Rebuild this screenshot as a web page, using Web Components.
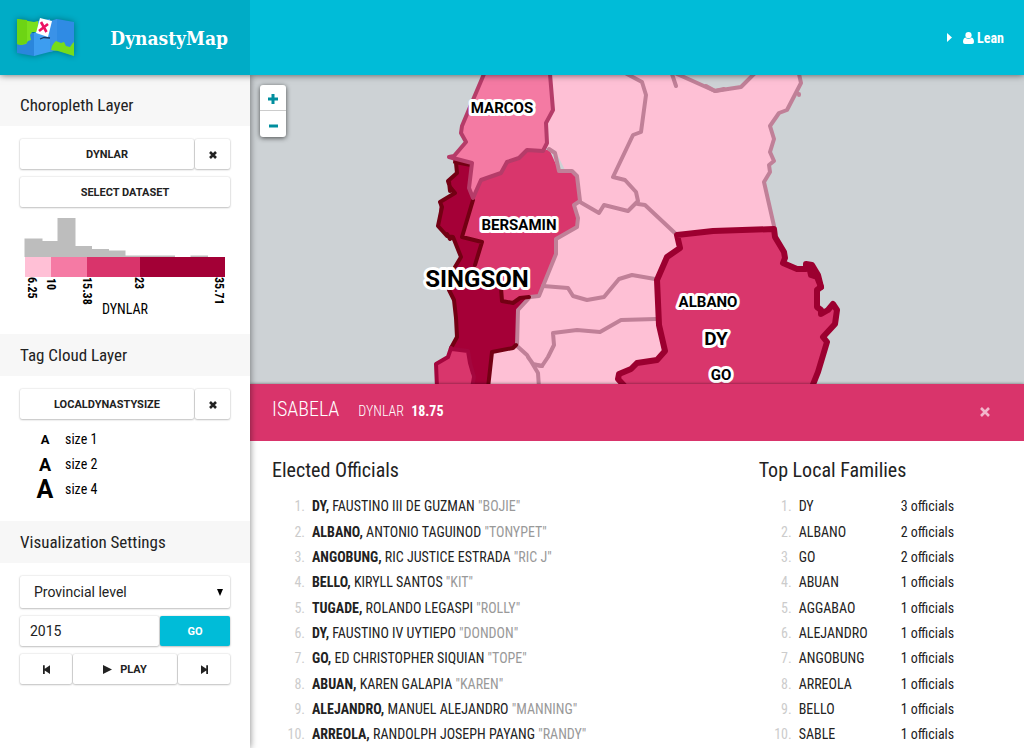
<!DOCTYPE html>
<html lang="en">
<head>
<meta charset="utf-8">
<title>DynastyMap</title>
<style>
  html, body { margin: 0; height: 100%; }
  body {
    font-family: "Roboto Condensed", Roboto, sans-serif;
    font-size: 14px;
    color: #222;
    background: #fff;
  }
</style>
</head>
<body>
<dynasty-app></dynasty-app>

<template id="app-template">
  <style>
    :host { display: grid; grid-template: auto minmax(0, 1fr) / 250px minmax(0, 1fr); height: 100vh; overflow: hidden; }
    .top { grid-column: 1 / -1; position: relative; z-index: 3; display: grid; grid-template-columns: 250px minmax(0, 1fr); box-shadow: 0 0 7px rgba(0,0,0,.6); }
    aside { position: relative; z-index: 2; display: flex; flex-direction: column; background: #fff; box-shadow: 0 0 7px rgba(0,0,0,.5); }
    main { display: flex; flex-direction: column; min-height: 0; }
    area-map { flex: 1; min-height: 0; }
  </style>
  <div class="top">
    <brand-bar></brand-bar>
    <user-bar></user-bar>
  </div>
  <aside>
    <side-panel first>
      <span slot="title">Choropleth Layer</span>
      <layer-buttons name="DYNLAR"></layer-buttons>
      <push-button>SELECT DATASET</push-button>
      <choropleth-legend></choropleth-legend>
    </side-panel>
    <side-panel>
      <span slot="title">Tag Cloud Layer</span>
      <layer-buttons name="LOCALDYNASTYSIZE"></layer-buttons>
      <tag-legend></tag-legend>
    </side-panel>
    <side-panel>
      <span slot="title">Visualization Settings</span>
      <viz-settings></viz-settings>
    </side-panel>
  </aside>
  <main>
    <area-map></area-map>
    <area-detail></area-detail>
  </main>
</template>

<template id="brand-bar-template">
  <style>
    :host { display: flex; align-items: center; justify-content: space-between; height: 75px; padding: 0 22px 0 10px; background: #00acc6; }
    h1 { margin: 0; font: bold 19px/24px "Roboto Slab", "DejaVu Serif Condensed", "DejaVu Serif", serif; color: #fff; }
    svg { display: block; filter: drop-shadow(0 0 3px rgba(0,0,0,.35)); }
  </style>
  <svg width="72" height="52" viewBox="10 12 72 52" aria-hidden="true">
    <path fill="#2a86dc" d="M17 30 34 33V56L17 53Z"/>
    <path fill="#3d9df0" d="M34 33 57 19V50L34 56Z"/>
    <path fill="#2f8be4" d="M57 19 74 22V56L57 50Z"/>
    <path fill="#3a92e8" d="M50 21 57 19V50L50 52Z"/>
    <path fill="#7be01e" d="M17 19 34 22 38 21V32L32 32 30 35 31 40 28 41 26 44 21 45 17 44Z"/>
    <path fill="#6dd414" d="M17 19 27 20V43L21 45 17 44Z"/>
    <path fill="#76dd1a" d="M51 50 52 46 54 43 56 41 61 43 64 42 66 46 70 47 72 44 74 42V56L58 51Z"/>
    <path fill="#3fa0f2" d="M38 21 50 19 50 38 38 36Z"/>
    <path fill="#fff" d="M40 18 52 21 48 37 36 33Z"/>
    <path fill="none" stroke="#173a66" stroke-width="1.3" d="M40 39 44 37.500 50 38"/>
    <path fill="none" stroke="#ec1162" stroke-width="2.600" d="M41 22 46.500 32M48 24 39 31"/>
  </svg>
  <h1>DynastyMap</h1>
</template>

<template id="user-bar-template">
  <style>
    :host { display: flex; justify-content: flex-end; align-items: center; height: 75px; padding-right: 20px; background: #00bcd8; }
    a { display: flex; align-items: center; font-weight: bold; line-height: 20px; color: #fff; text-decoration: none; }
    .arrow { margin-right: 11px; }
    .user { margin-right: 3px; }
  </style>
  <a href="#user">
    <svg class="arrow" width="5" height="9" viewBox="0 0 5 9" aria-hidden="true"><path fill="#fff" d="M0 0 5 4.500 0 9Z"/></svg>
    <svg class="user" width="11" height="12" viewBox="0 0 11 12" aria-hidden="true"><circle cx="5.500" cy="3.200" r="3.100" fill="#fff"/><path fill="#fff" d="M2.500 5.500Q5.500 8.500 8.500 5.500 11 6 11 10 11 12 9 12H2Q0 12 0 10 0 6 2.500 5.500Z"/></svg>
    <span>Lean</span>
  </a>
</template>

<template id="side-panel-template">
  <style>
    :host { display: block; }
    h2 { margin: 0; padding: 0 20px; font-size: 17px; line-height: 42px; font-weight: 400; background: #f7f7f7; }
    :host([first]) h2 { padding-top: 9px; }
    div { display: flex; flex-direction: column; gap: 8px; padding: 13px 20px 19px; }
  </style>
  <h2><slot name="title"></slot></h2>
  <div><slot></slot></div>
</template>

<template id="push-button-template">
  <style>
    :host { display: flex; }
    button { flex: 1; display: flex; align-items: center; justify-content: center; gap: 8px; min-width: 0; height: 30px; margin: 0; padding: 1px 0 0; border: 0; border-radius: 2px; background: #fff; color: #222; font: bold 11px/17px Roboto, sans-serif; box-shadow: 0 0 2px rgba(0,0,0,.2), 0 1px 2px rgba(0,0,0,.2); }
    :host([primary]) button { background: #00bcd8; color: #fff; }
  </style>
  <button type="button"><slot></slot></button>
</template>

<template id="layer-buttons-template">
  <style>
    :host { display: flex; gap: 1px; }
    .name { flex: 1; }
    .clear { width: 35px; }
    svg { display: block; }
  </style>
  <push-button class="name"><span></span></push-button>
  <push-button class="clear"><svg width="8" height="8" viewBox="0 0 8 8" role="img" aria-label="Clear"><path stroke="#222" stroke-width="2.600" d="M1 1 7 7M7 1 1 7"/></svg></push-button>
</template>

<template id="choropleth-legend-template">
  <style>
    :host { display: block; }
    svg { display: block; width: 100%; height: 100px; overflow: visible; }
    .tick text { font-size: 12px; font-weight: bold; }
    .title { font-size: 14px; }
  </style>
  <svg viewBox="20 215 210 100" role="img" aria-label="DYNLAR legend">
    <path fill="#bdbdbd" d="M24.500 257V238.500H42.500V241H57.500V218H75.500V246H92V249H109V250.500H125.500V255.500H175V257H190.500V255.500H208V257Z"/>
    <rect x="25" y="257" width="26" height="20" fill="#ffc0d6"/>
    <rect x="51" y="257" width="36" height="20" fill="#f57aa4"/>
    <rect x="87" y="257" width="53" height="20" fill="#d9346b"/>
    <rect x="140" y="257" width="85" height="20" fill="#a30036"/>
    <g class="tick">
      <text transform="translate(28 277) rotate(90)">6.25</text>
      <text transform="translate(47 278) rotate(90)">10</text>
      <text transform="translate(83 277) rotate(90)">15.38</text>
      <text transform="translate(135 277) rotate(90)">23</text>
      <text transform="translate(215 277) rotate(90)">35.71</text>
    </g>
    <text class="title" x="125" y="314" text-anchor="middle">DYNLAR</text>
  </svg>
</template>

<template id="tag-legend-template">
  <style>
    :host { display: block; }
    ul { list-style: none; margin: 0; padding: 0 0 0 5px; color: #000; }
    li { display: grid; grid-template-columns: 40px 1fr; align-items: center; height: 25px; line-height: 25px; }
    b { text-align: center; font-family: Roboto, sans-serif; }
    .s { font-size: 13px; }
    .m { font-size: 18px; }
    .l { font-size: 25px; }
  </style>
  <ul>
    <li><b class="s">A</b><span>size 1</span></li>
    <li><b class="m">A</b><span>size 2</span></li>
    <li><b class="l">A</b><span>size 4</span></li>
  </ul>
</template>

<template id="viz-settings-template">
  <style>
    :host { display: flex; flex-direction: column; gap: 8px; }
    .row { display: flex; gap: 1px; }
    .field { position: relative; display: block; }
    select, input { box-sizing: border-box; width: 100%; margin: 0; border: 0; border-radius: 2px; background: #fff; color: #222; font: 14px/20px Roboto, sans-serif; box-shadow: 0 0 2px rgba(0,0,0,.2), 0 1px 2px rgba(0,0,0,.2); }
    select { appearance: none; height: 32px; padding: 0 14px; }
    input { flex: 1; min-width: 0; height: 30px; padding: 0 10px; }
    .mark { position: absolute; right: 7px; top: 13px; }
    .go { width: 70px; }
    .step { width: 52px; }
    .play { flex: 1; }
    svg { display: block; }
  </style>
  <label class="field">
    <select aria-label="Level"><option>Provincial level</option><option>Municipal level</option></select>
    <svg class="mark" width="6" height="7" viewBox="0 0 6 7" aria-hidden="true"><path d="M0 0H6L3 7Z"/></svg>
  </label>
  <div class="row">
    <input type="text" value="2015" aria-label="Year">
    <push-button primary class="go">GO</push-button>
  </div>
  <div class="row">
    <push-button class="step"><svg width="7" height="9" viewBox="0 0 8 10" role="img" aria-label="Previous"><path fill="#222" d="M0 0H2V4L8 0V10L2 6V10H0Z"/></svg></push-button>
    <push-button class="play"><svg width="9" height="9" viewBox="0 0 9 9" aria-hidden="true"><path fill="#222" d="M0 0 9 4.500 0 9Z"/></svg><span>PLAY</span></push-button>
    <push-button class="step"><svg width="7" height="9" viewBox="0 0 8 10" role="img" aria-label="Next"><path fill="#222" d="M8 0H6V4L0 0V10L6 6V10H8Z"/></svg></push-button>
  </div>
</template>

<template id="area-map-template">
  <style>
    :host { position: relative; display: block; overflow: hidden; background: #cdd2d5; }
    .map { display: block; width: 100%; height: 100%; }
    path { stroke-linejoin: round; stroke-linecap: round; }
    .mauve { fill: none; stroke: #c08098; stroke-width: 4; }
    .rose { fill: none; stroke: #b53c69; stroke-width: 4; }
    .crimson { fill: none; stroke: #a4063e; stroke-width: 4; }
    .wine { fill: none; stroke: #730013; stroke-width: 4; }
    text { font-family: Roboto, sans-serif; font-weight: bold; fill: #000; stroke: #fff; stroke-width: 6px; stroke-linejoin: round; paint-order: stroke; text-anchor: middle; }
    .s { font-size: 15px; }
    .m { font-size: 19px; }
    .l { font-size: 24px; }
    .zoom { position: absolute; left: 10px; top: 10px; width: 26px; border-radius: 3px; background: #fff; box-shadow: 0 1px 5px rgba(0,0,0,.65); }
    .zoom button { display: flex; align-items: center; justify-content: center; box-sizing: border-box; width: 26px; height: 26px; padding: 3px 0 0; border: 0; background: none; }
    .zoom button:first-child { border-bottom: 1px solid #ccc; }
    .zoom path { fill: none; stroke: #008e9e; stroke-width: 3; stroke-linecap: butt; }
  </style>
  <svg class="map" viewBox="250 75 774 309" preserveAspectRatio="xMidYMin slice" role="img" aria-label="Map of provinces">
    <path fill="#fec0d5" d="M550 70H677V74L715 91 741 87 755 73V70H799V75L801 83 787 110 779 113 770 126 774 139 770 152 774 161 769 165 770 172 764 182 774 226V390H485L490 350 517 346 518 310 555 240 580 200 555 150 547 149Z"/>
    <path fill="#d9366c" d="M451 348 448 357 436 364 437 390H475L472 377 468 351Z"/>
    <path fill="#a50037" d="M449 157 455 162 456 173 448 181 450 187 455 193 440 202 438 226 447 236 453 237 461 257 455 267 449 290 454 300 456 318 457 337 451 348 468 350 470 363 474 377 471 390H488L492 352 513 348 517 345 518 310 530 297 545 285 545 180 480 160Z"/>
    <path fill="#d9366c" d="M473 200 481 180 501 173 507 162 519 158 527 150 543 151 549 149 559 171 572 171 577 176 580 201 574 205 578 218 577 227 556 239 556 254 543 286 539 296 520 298 513 303 502 301 501 288 475 266 482 242 462 237Z"/>
    <path fill="#f47aa3" d="M486 70 484 75 470 107 462 126 461 133 466 142 454 156 449 157 472 163 469 188 473 198 481 180 501 173 507 162 519 158 527 150 543 151 547 143 546 123 553 110 550 70Z"/>
    <path class="mauve" d="M672 74 676 86M677 74 715 91 741 87 755 73M799 74 801 83 787 110 779 113 770 126 774 139 770 152 774 161 769 165 770 172 764 182 774 226M799 94V95"/>
    <path class="mauve" d="M706 86 715 91 724 89M627 74 642 82 646 95 641 132 633 135 613 177 625 180 636 192 638 201 628 211 604 205 599 213 580 202M638 204 645 205 677 235M543 286 568 288 573 296 587 300 604 297 619 279 632 275 655 279M535 365 542 366 548 357 554 345 553 333 577 330 600 332 621 320 656 319"/>
    <path class="mauve" d="M549 149 555 153 559 171 572 171 577 176 580 201 574 205 578 218 577 227 556 239 556 254 543 286 539 296 530 297 518 310 517 346 527 355 532 363 538 373 539 388M528 357 533 364 542 366"/>
    <path class="wine" d="M455 162 471 165M456 163 457 173 448 181 450 187 455 193 440 202 442 207 438 226 447 236 453 237 461 257 455 267 449 290 454 300 456 318 457 337 451 348M473 200 462 237 482 242 475 265M501 288 502 301 513 303 520 298 529 297M488 388 492 352 513 348 516 345M449 182 450 191M447 234 450 239"/>
    <path class="crimson" d="M451 348 448 357 436 364 437 388M452 349 468 351 470 363 474 377 472 388"/>
    <path class="rose" d="M484 74 470 107 462 126 461 133 466 142 454 156 449 157 472 163 469 188 473 198 481 180 501 173 507 162 519 158 527 150 543 151 547 143 546 123 553 110 550 74"/>
    <path fill="#d9366c" stroke="#9c0030" stroke-width="6" d="M677 235 713 231 774 229 775 237 784 252 785 258 783 263 797 269 806 269 806 264 812 265 818 275 821 287 817 290 817 307 821 310 821 314 828 310 833 304 837 310 835 324 823 337 827 342 818 372 810 392H630L618 379 619 374 631 369 637 363 657 360 665 351 659 325 657 280 667 257 680 248Z"/>
    <path fill="none" stroke="#9c0030" stroke-width="6" d="M809 266 811 275 817 277 821 287"/>
    <text class="s" x="502" y="113">MARCOS</text>
    <text class="s" x="519" y="230">BERSAMIN</text>
    <text class="l" x="477" y="287">SINGSON</text>
    <text class="s" x="708" y="307">ALBANO</text>
    <text class="m" x="716" y="345">DY</text>
    <text class="s" x="721" y="380">GO</text>
  </svg>
  <div class="zoom">
    <button type="button" aria-label="Zoom in"><svg width="10" height="10" viewBox="0 0 10 10"><path d="M5 0V10M0 5H10"/></svg></button>
    <button type="button" aria-label="Zoom out"><svg width="10" height="10" viewBox="0 0 10 10"><path d="M1 5H10"/></svg></button>
  </div>
</template>

<template id="area-detail-template">
  <style>
    :host { position: relative; display: block; background: #fff; box-shadow: 0 0 3px rgba(0,0,0,.5); }
    header { display: flex; align-items: baseline; height: 57px; box-sizing: border-box; padding: 12px 34px 0 22px; background: #d9346b; color: #fff; }
    h2 { margin: 0 19px 0 0; font-size: 20px; line-height: 26px; font-weight: 300; }
    p { flex: 1; margin: 0; line-height: 20px; font-weight: 300; }
    p b { margin-left: 4px; font-weight: 700; }
    button { align-self: flex-start; margin-top: 11px; padding: 0; border: 0; background: none; }
    svg { display: block; }
    .body { display: grid; grid-template-columns: 2fr 1fr; padding: 16px 22px 1px; }
    h3 { margin: 0 0 11px; font-size: 20px; line-height: 26px; font-weight: 400; }
  </style>
  <header>
    <h2>ISABELA</h2>
    <p>DYNLAR <b>18.75</b></p>
    <button type="button" aria-label="Close"><svg width="10" height="10" viewBox="0 0 10 10"><path stroke="#f2b6cb" stroke-width="2.600" d="M1 1 9 9M9 1 1 9"/></svg></button>
  </header>
  <div class="body">
    <section><h3>Elected Officials</h3><officials-list></officials-list></section>
    <section><h3>Top Local Families</h3><families-table></families-table></section>
  </div>
</template>

<template id="officials-list-template">
  <style>
    :host { display: block; }
    ol { margin: 0; padding: 0; list-style: none; }
    li { display: grid; grid-template-columns: 33px 1fr; column-gap: 7px; line-height: 25px; white-space: nowrap; }
    li:nth-child(3n+1) { padding-bottom: 1px; }
    li:last-child { padding-bottom: 0; }
    .n { text-align: right; color: #ccc; }
    .nick { color: #999; }
  </style>
  <ol></ol>
</template>

<template id="families-table-template">
  <style>
    :host { display: block; }
    table { border-collapse: collapse; }
    td { height: 25px; padding: 0; line-height: 25px; white-space: nowrap; }
    tr:nth-child(3n+1) td { padding-bottom: 1px; }
    tr:last-child td { padding-bottom: 0; }
    .n { width: 33px; text-align: right; color: #ccc; }
    .name { width: 94px; padding-left: 7px; }
    .count { padding-left: 8px; }
  </style>
  <table><tbody></tbody></table>
</template>

<script>
  class TemplateElement extends HTMLElement {
    connectedCallback() {
      if (this.shadowRoot) return;
      const root = this.attachShadow({ mode: 'open' });
      root.append(document.getElementById(this.templateId).content.cloneNode(true));
      this.ready(root);
    }
    get templateId() { return this.localName + '-template'; }
    ready() {}
  }

  customElements.define('dynasty-app', class extends TemplateElement {
    get templateId() { return 'app-template'; }
  });

  for (const name of ['brand-bar', 'user-bar', 'side-panel', 'push-button', 'choropleth-legend',
                      'tag-legend', 'viz-settings', 'area-map', 'area-detail']) {
    customElements.define(name, class extends TemplateElement {});
  }

  customElements.define('layer-buttons', class extends TemplateElement {
    ready(root) { root.querySelector('span').textContent = this.getAttribute('name'); }
  });

  const officials = [
    ['DY', 'FAUSTINO III DE GUZMAN', 'BOJIE'],
    ['ALBANO', 'ANTONIO TAGUINOD', 'TONYPET'],
    ['ANGOBUNG', 'RIC JUSTICE ESTRADA', 'RIC J'],
    ['BELLO', 'KIRYLL SANTOS', 'KIT'],
    ['TUGADE', 'ROLANDO LEGASPI', 'ROLLY'],
    ['DY', 'FAUSTINO IV UYTIEPO', 'DONDON'],
    ['GO', 'ED CHRISTOPHER SIQUIAN', 'TOPE'],
    ['ABUAN', 'KAREN GALAPIA', 'KAREN'],
    ['ALEJANDRO', 'MANUEL ALEJANDRO', 'MANNING'],
    ['ARREOLA', 'RANDOLPH JOSEPH PAYANG', 'RANDY'],
  ];
  customElements.define('officials-list', class extends TemplateElement {
    ready(root) {
      root.querySelector('ol').innerHTML = officials.map(([last, first, nick], i) =>
        `<li><span class="n">${i + 1}.</span><span><b>${last},</b> ${first} <span class="nick">"${nick}"</span></span></li>`).join('');
    }
  });

  const families = [['DY', 3], ['ALBANO', 2], ['GO', 2], ['ABUAN', 1], ['AGGABAO', 1],
                    ['ALEJANDRO', 1], ['ANGOBUNG', 1], ['ARREOLA', 1], ['BELLO', 1], ['SABLE', 1]];
  customElements.define('families-table', class extends TemplateElement {
    ready(root) {
      root.querySelector('tbody').innerHTML = families.map(([name, count], i) =>
        `<tr><td class="n">${i + 1}.</td><td class="name">${name}</td><td class="count">${count} officials</td></tr>`).join('');
    }
  });
</script>
</body>
</html>
